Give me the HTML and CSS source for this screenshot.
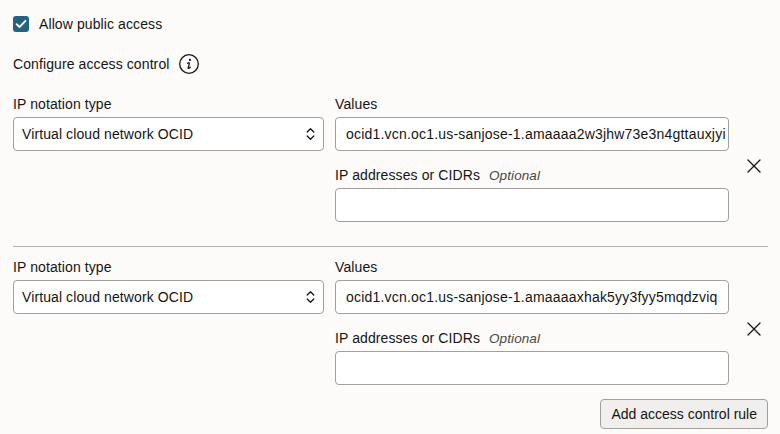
FILE: index.html
```html
<!DOCTYPE html>
<html lang="en">
<head>
<meta charset="utf-8">
<link rel="stylesheet" href="styles.css">
</head>
<body>
<div class="page">
  <label class="check-row">
    <span class="checkbox">
      <svg width="12" height="10" viewBox="0 0 12 10"><path d="M1.5 5.2 L4.5 8 L10.5 1.8" fill="none" stroke="#fff" stroke-width="1.8" stroke-linecap="round" stroke-linejoin="round"/></svg>
    </span>
    <span>Allow public access</span>
  </label>

  <div class="config-row">
    <span>Configure access control</span>
    <svg class="info" width="22" height="22" viewBox="0 0 22 22"><circle cx="11" cy="11" r="9.3" fill="none" stroke="#161513" stroke-width="1.3"/><circle cx="11.9" cy="6.9" r="1.1" fill="#161513"/><path d="M9.6 10.2 Q10.6 9.4 11.2 9.8 Q11.5 10.2 11.1 11.6 L10.2 14.6 Q10 15.6 10.8 15.4 Q11.5 15.2 12.3 14.3" fill="none" stroke="#161513" stroke-width="1.3" stroke-linecap="round"/></svg>
  </div>

  <div class="rule">
    <div class="col-type">
      <div class="label">IP notation type</div>
      <div class="select">
        <span>Virtual cloud network OCID</span>
        <svg class="chev" width="9" height="14" viewBox="0 0 9 14"><path d="M1.2 5 L4.5 1.8 L7.8 5 M1.2 9 L4.5 12.2 L7.8 9" fill="none" stroke="#161513" stroke-width="1.3" stroke-linecap="round" stroke-linejoin="round"/></svg>
      </div>
    </div>
    <div class="col-values">
      <div class="label">Values</div>
      <div class="input"><span class="val">ocid1.vcn.oc1.us-sanjose-1.amaaaa2w3jhw73e3n4gttauxjyi</span></div>
      <div class="label label-second">IP addresses or CIDRs <em class="opt">Optional</em></div>
      <div class="input"></div>
    </div>
    <div class="col-remove">
      <button class="remove" aria-label="Remove">
        <svg width="14" height="14" viewBox="0 0 14 14"><path d="M1 1 L13 13 M13 1 L1 13" stroke="#161513" stroke-width="1.3" stroke-linecap="round"/></svg>
      </button>
    </div>
  </div>

  <div class="divider"></div>

  <div class="rule">
    <div class="col-type">
      <div class="label">IP notation type</div>
      <div class="select">
        <span>Virtual cloud network OCID</span>
        <svg class="chev" width="9" height="14" viewBox="0 0 9 14"><path d="M1.2 5 L4.5 1.8 L7.8 5 M1.2 9 L4.5 12.2 L7.8 9" fill="none" stroke="#161513" stroke-width="1.3" stroke-linecap="round" stroke-linejoin="round"/></svg>
      </div>
    </div>
    <div class="col-values">
      <div class="label">Values</div>
      <div class="input"><span class="val">ocid1.vcn.oc1.us-sanjose-1.amaaaaxhak5yy3fyy5mqdzviq</span></div>
      <div class="label label-second">IP addresses or CIDRs <em class="opt">Optional</em></div>
      <div class="input"></div>
    </div>
    <div class="col-remove">
      <button class="remove" aria-label="Remove">
        <svg width="14" height="14" viewBox="0 0 14 14"><path d="M1 1 L13 13 M13 1 L1 13" stroke="#161513" stroke-width="1.3" stroke-linecap="round"/></svg>
      </button>
    </div>
  </div>

  <div class="actions">
    <button class="btn">Add access control rule</button>
  </div>
</div>
</body>
</html>
```

FILE: styles.css
```css
html, body {
  margin: 0;
  padding: 0;
  background: #fcfbfa;
}
body {
  font-family: "Liberation Sans", Arial, sans-serif;
  font-size: 14px;
  letter-spacing: 0.1px;
  color: #161513;
}
.page {
  width: 755px;
  padding: 14px 0 0 13px;
}
.check-row {
  display: flex;
  align-items: center;
  gap: 10px;
  height: 20px;
  line-height: 20px;
}
.checkbox {
  width: 16px;
  height: 16px;
  border-radius: 3px;
  background: #25627f;
  display: flex;
  align-items: center;
  justify-content: center;
}
.config-row {
  display: flex;
  align-items: center;
  gap: 9px;
  margin-top: 19px;
  height: 22px;
}
.info {
  display: block;
}
.rule {
  display: flex;
  margin-top: 19px;
}
.divider + .rule {
  margin-top: 10px;
}
.col-type {
  width: 311px;
  flex: none;
}
.col-values {
  width: 394px;
  flex: none;
  margin-left: 11px;
}
.col-remove {
  width: 50px;
  flex: none;
  display: flex;
  justify-content: center;
  align-items: flex-start;
  padding-top: 56px;
}
.label {
  height: 20px;
  line-height: 20px;
  margin-bottom: 3px;
  white-space: nowrap;
}
.label-second {
  margin-top: 14px;
}
.opt {
  font-style: italic;
  color: #4a4744;
  margin-left: 5px;
  font-size: 13.5px;
}
.select, .input {
  box-sizing: border-box;
  height: 34px;
  border: 1px solid #a39e99;
  border-radius: 4px;
  background: #ffffff;
  display: flex;
  align-items: center;
  overflow: hidden;
  white-space: nowrap;
}
.select {
  justify-content: space-between;
  padding: 0 8px 0 8px;
}
.input {
  padding: 0 0 0 10px;
}
.val {
  letter-spacing: 0.2px;
}
.chev {
  display: block;
}
.remove {
  width: 32px;
  height: 32px;
  border: none;
  background: transparent;
  padding: 0;
  display: flex;
  align-items: center;
  justify-content: center;
}
.divider {
  width: 755px;
  height: 1px;
  background: #b5b1ad;
  margin-top: 24px;
}
.actions {
  display: flex;
  justify-content: flex-end;
  margin-top: 14px;
}
.btn {
  box-sizing: border-box;
  height: 30px;
  padding: 0 10px;
  border: 1px solid #a39e99;
  border-radius: 4px;
  background: #f1efed;
  font-family: "Liberation Sans", Arial, sans-serif;
  font-size: 14px;
  letter-spacing: 0;
  color: #161513;
}
```
